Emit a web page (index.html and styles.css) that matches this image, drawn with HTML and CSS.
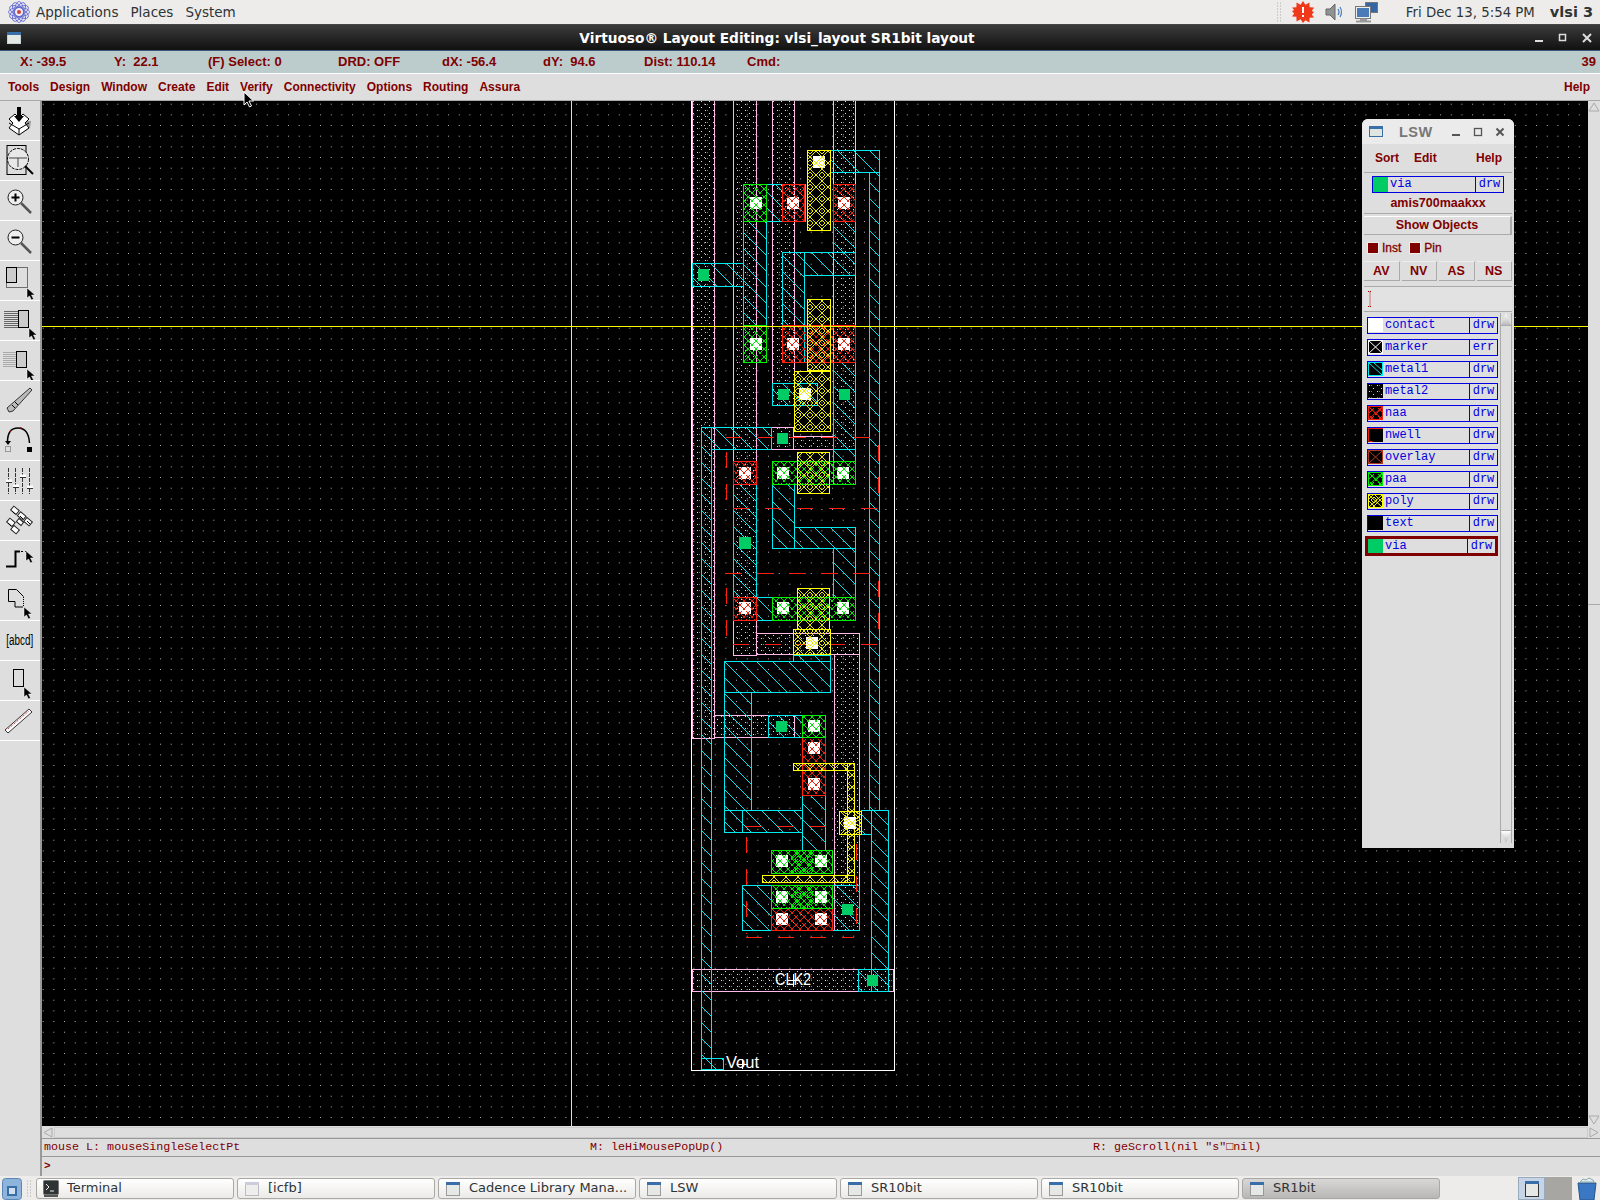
FILE: index.html
```html
<!DOCTYPE html>
<html lang="en">
<head>
    <meta charset="UTF-8">
    <title>Virtuoso Layout Editing: vlsi_layout SR1bit layout</title>
    <link rel="stylesheet" href="styles.css">
</head>
<body>
    <!-- GNOME top panel -->
    <div class="panel">
        <svg class="panel-logo" width="24" height="24" viewBox="0 0 24 24">
            <g fill="none" stroke="#5a62d0" stroke-width="0.8">
                <ellipse cx="12" cy="12" rx="10.5" ry="4.5"/>
                <ellipse cx="12" cy="12" rx="10.5" ry="4.5" transform="rotate(30 12 12)"/>
                <ellipse cx="12" cy="12" rx="10.5" ry="4.5" transform="rotate(60 12 12)"/>
                <ellipse cx="12" cy="12" rx="10.5" ry="4.5" transform="rotate(90 12 12)"/>
                <ellipse cx="12" cy="12" rx="10.5" ry="4.5" transform="rotate(120 12 12)"/>
                <ellipse cx="12" cy="12" rx="10.5" ry="4.5" transform="rotate(150 12 12)"/>
            </g>
            <circle cx="12" cy="12" r="2" fill="#d04040"/>
        </svg>
        <span class="panel-menu">Applications</span>
        <span class="panel-menu">Places</span>
        <span class="panel-menu">System</span>
        <span class="panel-spacer"></span>
        <svg class="tray-handle" width="6" height="20" viewBox="0 0 6 20">
            <path d="M0 1h1M3 1h1M0 4h1M3 4h1M0 7h1M3 7h1M0 10h1M3 10h1M0 13h1M3 13h1M0 16h1M3 16h1M0 19h1M3 19h1" stroke="#aaa" fill="none"/>
        </svg>
        <svg class="tray-icon" width="22" height="22" viewBox="0 0 22 22">
            <path d="M11 0l2.400 3.800 4-2.200.2 4.600 4.400.2-2.200 3.600 2.200 1-2.200 2.600 2.200 3-4.400.2-.2 4.600-4-2.200L11 22l-2.400-3.800-4 2.200-.2-4.600-4.400-.2 2.200-3-2.200-2.600 2.200-1L0 6.400l4.400-.2.2-4.600 4 2.200z" fill="#f0381a"/>
            <path d="M10 6h2v6h-2zM10 14h2v2h-2z" fill="#fff"/>
        </svg>
        <svg class="tray-icon tray-sound" width="20" height="20" viewBox="0 0 20 20">
            <path d="M1 7h4l5-5v16l-5-5H1z" fill="#8f9492" stroke="#666"/>
            <path d="M13 7q2 3 0 6M15 5q3 5 0 10" fill="none" stroke="#4a7fc0" stroke-width="1.2"/>
        </svg>
        <svg class="tray-icon tray-net" width="24" height="22" viewBox="0 0 24 22">
            <rect x="10.5" y="1.500" width="12" height="10" fill="#3465a4" stroke="#777"/>
            <rect x="1.500" y="6.500" width="13" height="10" fill="#4a7ab8" stroke="#eee"/>
            <rect x="0.500" y="5.500" width="15" height="12" fill="none" stroke="#777"/>
            <path d="M1 20.500h15M5 18.500h7" stroke="#999" stroke-width="2"/>
        </svg>
        <span class="panel-clock">Fri Dec 13, 5:54 PM</span>
        <span class="panel-user">vlsi 3</span>
    </div>

    <!-- window title -->
    <div class="titlebar">
        <svg class="win-icon" width="14" height="12" viewBox="0 0 14 12">
            <rect x="0.500" y="0.500" width="13" height="11" fill="#e4e8e4" stroke="#c8d0d8"/>
            <rect x="0" y="0" width="14" height="3" fill="#3a6ea8"/>
        </svg>
        <span class="title-text">Virtuoso® Layout Editing: vlsi_layout SR1bit layout</span>
        <div class="win-buttons">
            <svg width="12" height="12" viewBox="0 0 12 12"><rect x="2" y="8" width="8" height="2" fill="#ddd"/></svg>
            <svg width="12" height="12" viewBox="0 0 12 12"><rect x="2.500" y="2.500" width="6" height="6" fill="none" stroke="#ddd" stroke-width="1.500"/></svg>
            <svg width="12" height="12" viewBox="0 0 12 12"><path d="M2 2l8 8M10 2l-8 8" stroke="#ddd" stroke-width="2"/></svg>
        </div>
    </div>

    <!-- coordinate readout -->
    <div class="coords">
        <span class="coord coord-x">X: -39.5</span>
        <span class="coord coord-y">Y:&nbsp; 22.1</span>
        <span class="coord coord-sel">(F) Select: 0</span>
        <span class="coord coord-drd">DRD: OFF</span>
        <span class="coord coord-dx">dX: -56.4</span>
        <span class="coord coord-dy">dY:&nbsp; 94.6</span>
        <span class="coord coord-dist">Dist: 110.14</span>
        <span class="coord">Cmd:</span>
        <span class="coord coord-num">39</span>
    </div>

    <div class="menubar">
        <span>Tools</span>
        <span>Design</span>
        <span>Window</span>
        <span>Create</span>
        <span>Edit</span>
        <span>Verify</span>
        <span>Connectivity</span>
        <span>Options</span>
        <span>Routing</span>
        <span>Assura</span>
        <span class="menu-help">Help</span>
    </div>

    <div class="workarea">
        <!-- tool strip -->
        <div class="tools">
            <svg class="defs-holder" width="0" height="0">
                <defs>
                    <path id="ptr" d="M0 0v10l2.500-2 2 4 2-1-2-4h3.500z" fill="#000" stroke="#fff" stroke-width="0.500"/>
                </defs>
            </svg>
            <div class="tool"><svg width="40" height="39" viewBox="0 0 40 39">
                <path d="M10 19l9 15 11-7 1-7z" fill="#999"/>
                <path d="M9 18l6-5 4 4 4-4 6 5-4 4 4 5-10 7-10-7 4-5z" fill="#fff" stroke="#000"/>
                <path d="M9 22l10 6 10-6M19 28v6" fill="none" stroke="#000"/>
                <path d="M17 6h4v9h3l-5 6-5-6h3z" fill="#000"/>
            </svg></div>
            <div class="tool"><svg width="40" height="39" viewBox="0 0 40 39">
                <rect x="7" y="4.500" width="19" height="29" fill="#ddd" stroke="#000"/>
                <circle cx="18" cy="18" r="10.500" fill="#e8e8e8" stroke="#000" stroke-dasharray="3 1"/>
                <path d="M9 17h18M18 17v9" stroke="#444"/>
                <path d="M25 25l8 8" stroke="#000" stroke-width="2"/>
            </svg></div>
            <div class="tool"><svg width="40" height="39" viewBox="0 0 40 39">
                <circle cx="15.500" cy="16.500" r="7.500" fill="#eee" stroke="#222"/>
                <path d="M11.500 16.500h8M15.500 12.500v8" stroke="#000" stroke-width="2"/>
                <path d="M21 22l10 10" stroke="#555" stroke-width="2.500"/>
            </svg></div>
            <div class="tool"><svg width="40" height="39" viewBox="0 0 40 39">
                <circle cx="15.500" cy="16.500" r="7.500" fill="#eee" stroke="#222"/>
                <path d="M11.500 16.500h8" stroke="#000" stroke-width="2"/>
                <path d="M21 22l10 10" stroke="#555" stroke-width="2.500"/>
            </svg></div>
            <div class="tool"><svg width="40" height="39" viewBox="0 0 40 39">
                <rect x="6.500" y="6.500" width="21" height="20" fill="none" stroke="#000" stroke-dasharray="1 1"/>
                <rect x="6.500" y="6.500" width="10" height="15" fill="#ccc" stroke="#000"/>
                <use href="#ptr" x="27" y="27"/>
            </svg></div>
            <div class="tool"><svg width="40" height="39" viewBox="0 0 40 39">
                <path d="M4 10.500h15M4 12.500h15M4 14.500h15M4 16.500h15M4 18.500h15M4 20.500h15M4 22.500h15M4 24.500h15M4 26.500h15" stroke="#666"/>
                <rect x="18.500" y="9.500" width="10" height="17" fill="#ccc" stroke="#000"/>
                <use href="#ptr" x="29" y="27"/>
            </svg></div>
            <div class="tool"><svg width="40" height="39" viewBox="0 0 40 39">
                <path d="M3 11.500h13M3 13.500h13M3 15.500h13M3 17.500h13M3 19.500h13M3 21.500h13M3 23.500h13M3 25.500h13" stroke="#aaa"/>
                <rect x="16.500" y="10.500" width="10" height="16" fill="#ccc" stroke="#000"/>
                <use href="#ptr" x="27" y="28"/>
            </svg></div>
            <div class="tool"><svg width="40" height="39" viewBox="0 0 40 39">
                <path d="M7 27l2 4 4-1 19-21-2-2z" fill="#bbb" stroke="#333"/>
                <path d="M12 24l3 3M15 21l3 3" stroke="#000"/>
            </svg></div>
            <div class="tool"><svg width="40" height="39" viewBox="0 0 40 39">
                <path d="M7.500 21q0-14 10.500-14t11.500 15" fill="none" stroke="#000" stroke-width="1.500"/>
                <path d="M10 11l2-2M20 7h2" stroke="#a00"/>
                <path d="M5 20h6l-3 4z" fill="#000"/>
                <rect x="5.500" y="25.500" width="5" height="5" fill="none" stroke="#555" stroke-dasharray="1 1"/>
                <rect x="27" y="26" width="5" height="5" fill="#000"/>
            </svg></div>
            <div class="tool"><svg width="40" height="39" viewBox="0 0 40 39">
                <path d="M8.500 7v26M15.500 7v26M22.500 7v26M29.500 7v26" stroke="#333" stroke-dasharray="4 1"/>
                <path d="M6 20h6M13 25h6M20 15h6M27 26h6" stroke="#fff" stroke-width="3"/>
                <path d="M6 21.500h6M13 26.500h6M20 16.500h6M27 27.500h6" stroke="#333"/>
            </svg></div>
            <div class="tool"><svg width="40" height="39" viewBox="0 0 40 39">
                <g fill="#fff" stroke="#222">
                    <rect x="11" y="7" width="7" height="5" transform="rotate(40 15 10)"/>
                    <rect x="18" y="12" width="7" height="5" transform="rotate(40 21 15)"/>
                    <rect x="25" y="18" width="7" height="5" transform="rotate(40 28 20)"/>
                    <rect x="7" y="19" width="7" height="5" transform="rotate(40 11 22)"/>
                    <rect x="12" y="26" width="7" height="5" transform="rotate(40 15 28)"/>
                    <rect x="17" y="19" width="6" height="4" transform="rotate(40 20 21)"/>
                </g>
                <path d="M12 10l3 3M20 15l3 3M27 20l3 3M8 22l3 3" stroke="#000"/>
            </svg></div>
            <div class="tool"><svg width="40" height="39" viewBox="0 0 40 39">
                <path d="M6 25.500h9.500V10.500H20" fill="none" stroke="#000" stroke-width="2"/>
                <path d="M21 10.500h6" stroke="#000" stroke-dasharray="2 2"/>
                <use href="#ptr" x="26" y="10"/>
            </svg></div>
            <div class="tool"><svg width="40" height="39" viewBox="0 0 40 39">
                <path d="M8.500 8.500h8l7 7" fill="none" stroke="#000"/>
                <path d="M23.500 16v10" stroke="#000" stroke-dasharray="1 1"/>
                <path d="M8.500 8.500v12h6.500v5.500h8" fill="none" stroke="#000"/>
                <use href="#ptr" x="24" y="26"/>
            </svg></div>
            <div class="tool"><span class="tool-label">[abcd]</span></div>
            <div class="tool"><svg width="40" height="39" viewBox="0 0 40 39">
                <rect x="13.500" y="8.500" width="10" height="17" fill="#ddd" stroke="#000"/>
                <use href="#ptr" x="24" y="26"/>
            </svg></div>
            <div class="tool"><svg width="40" height="39" viewBox="0 0 40 39">
                <path d="M5 29l3 3 24-21-3-3z" fill="#fff" stroke="#333"/>
                <path d="M8 28l21-18" stroke="#b02020" stroke-dasharray="1 1"/>
            </svg></div>
        </div>

        <div class="editor">
            <div class="canvas-row">
                <div class="canvas">
                    <svg class="layout" width="1546" height="1025" viewBox="42 100 1546 1025" shape-rendering="crispEdges">
                        <defs>
                            <pattern id="grid" x="42.700" y="102.700" width="10.667" height="10.667" patternUnits="userSpaceOnUse">
                                <rect width="1" height="1" fill="#b8b8b8"/>
                            </pattern>
                            <pattern id="hatch" width="16" height="16" patternUnits="userSpaceOnUse">
                                <path d="M0 0l16 16" stroke="#00e8f0" stroke-width="1" fill="none"/>
                            </pattern>
                            <pattern id="dots" width="8" height="6" patternUnits="userSpaceOnUse">
                                <rect x="1" y="1" width="1" height="1" fill="#ffd0f0"/>
                                <rect x="5" y="4" width="1" height="1" fill="#ffd0f0"/>
                                <rect x="3" y="1" width="1" height="1" fill="#906088"/>
                            </pattern>
                            <pattern id="weave-green" width="8" height="8" patternUnits="userSpaceOnUse">
                                <path d="M0 0l8 8M8 0l-8 8" stroke="#00e800" stroke-width="1" fill="none" stroke-dasharray="2 1"/>
                            </pattern>
                            <pattern id="weave-red" width="8" height="8" patternUnits="userSpaceOnUse">
                                <path d="M0 0l8 8M8 0l-8 8" stroke="#f02010" stroke-width="1" fill="none" stroke-dasharray="2 1"/>
                            </pattern>
                            <pattern id="diamond" width="12" height="12" patternUnits="userSpaceOnUse">
                                <path d="M6 0l6 6-6 6-6-6zM6 3l3 3-3 3-3-3z" stroke="#e8e800" stroke-width="1" fill="none"/>
                            </pattern>
                            <pattern id="diamond-green" width="12" height="12" patternUnits="userSpaceOnUse">
                                <path d="M6 0l6 6-6 6-6-6zM6 3l3 3-3 3-3-3z" stroke="#00e800" stroke-width="1" fill="none"/>
                            </pattern>
                        </defs>

                        <rect x="42" y="100" width="1546" height="1025" fill="#000"/>
                        <rect x="42" y="100" width="1546" height="1025" fill="url(#grid)"/>

                        <!-- outline -->
                        <rect x="691.500" y="90" width="203" height="979" fill="none" stroke="#fff"/>

                        <!-- metal2 -->
                        <g fill="url(#dots)" stroke="#ffb8e8">
                            <rect x="692.500" y="90" width="22" height="647"/>
                            <rect x="733.500" y="90" width="23" height="564"/>
                            <rect x="756.500" y="632.500" width="103" height="21"/>
                            <rect x="834.500" y="653.500" width="25" height="276"/>
                            <rect x="714.500" y="714.500" width="80" height="22"/>
                            <rect x="772.500" y="90" width="22" height="314.500"/>
                            <rect x="833.500" y="90" width="22" height="358.500"/>
                            <rect x="771.500" y="426.500" width="22" height="22"/>
                            <rect x="793.500" y="435.500" width="40" height="13"/>
                            <rect x="692.500" y="968.500" width="201" height="22"/>
                        </g>

                        <!-- metal1 -->
                        <g fill="url(#hatch)" stroke="#00e8f0">
                            <rect x="830.500" y="149.500" width="49" height="22"/>
                            <rect x="869.500" y="171.500" width="10" height="638"/>
                            <rect x="743.500" y="183.500" width="62" height="37"/>
                            <rect x="743.500" y="220.500" width="23" height="141"/>
                            <rect x="692.500" y="262.500" width="51" height="23"/>
                            <rect x="782.500" y="251.500" width="22" height="110"/>
                            <rect x="804.500" y="251.500" width="51" height="23"/>
                            <rect x="833.500" y="220.500" width="22" height="31"/>
                            <rect x="772.500" y="382.500" width="45" height="22"/>
                            <rect x="833.500" y="361.500" width="22" height="87"/>
                            <rect x="711.500" y="426.500" width="60" height="22"/>
                            <rect x="701.500" y="426.500" width="10" height="642"/>
                            <rect x="833.500" y="448.500" width="22" height="35"/>
                            <rect x="733.500" y="483.500" width="23" height="113"/>
                            <rect x="756.500" y="596.500" width="16" height="23"/>
                            <rect x="772.500" y="483.500" width="22" height="64"/>
                            <rect x="794.500" y="526.500" width="61" height="21"/>
                            <rect x="833.500" y="547.500" width="22" height="49"/>
                            <rect x="724.500" y="660.500" width="106" height="31"/>
                            <rect x="793.500" y="654.500" width="37" height="6"/>
                            <rect x="724.500" y="691.500" width="27" height="118"/>
                            <rect x="724.500" y="809.500" width="18" height="22"/>
                            <rect x="742.500" y="809.500" width="60" height="22"/>
                            <rect x="802.500" y="794.500" width="23" height="55"/>
                            <rect x="768.500" y="714.500" width="34" height="22"/>
                            <rect x="742.500" y="884.500" width="117" height="45"/>
                            <rect x="861.500" y="809.500" width="10" height="24"/>
                            <rect x="871.500" y="809.500" width="17" height="181"/>
                            <rect x="858.500" y="968.500" width="30" height="22"/>
                            <rect x="701.500" y="1057.500" width="22" height="11"/>
                        </g>

                        <!-- overlay dashes -->
                        <g stroke="#ff2010" fill="none" stroke-dasharray="16 16">
                            <path d="M726 436.500H870M733 507.500H878M726 572.500H870M733 643.500H878M746 825.500H827M746 936.500H854"/>
                            <path d="M726.500 451V499M726.500 587V635M878.500 444V492M878.500 580V628M746.500 836V933M856.500 843V923"/>
                        </g>

                        <!-- naa -->
                        <g fill="url(#weave-red)" stroke="#ff2010">
                            <rect x="782.500" y="183.500" width="22" height="37"/>
                            <rect x="833.500" y="183.500" width="22" height="37"/>
                            <rect x="782.500" y="324.500" width="73" height="37"/>
                            <rect x="733.500" y="460.500" width="23" height="23"/>
                            <rect x="733.500" y="596.500" width="23" height="23"/>
                            <rect x="802.500" y="736.500" width="23" height="58"/>
                            <rect x="771.500" y="907.500" width="61" height="22"/>
                        </g>

                        <!-- paa -->
                        <g fill="url(#weave-green)" stroke="#00f000">
                            <rect x="743.500" y="183.500" width="23" height="37"/>
                            <rect x="743.500" y="324.500" width="23" height="37"/>
                            <rect x="772.500" y="460.500" width="83" height="23"/>
                            <rect x="772.500" y="596.500" width="83" height="23"/>
                            <rect x="802.500" y="714.500" width="23" height="22"/>
                            <rect x="771.500" y="849.500" width="61" height="23"/>
                            <rect x="771.500" y="884.500" width="61" height="23"/>
                        </g>
                        <g fill="url(#diamond-green)" stroke="none">
                            <rect x="791" y="850" width="22" height="22"/>
                            <rect x="791" y="885" width="22" height="22"/>
                        </g>

                        <!-- poly -->
                        <g fill="url(#diamond)" stroke="#ffff00" stroke-width="1">
                            <rect x="807.500" y="149.500" width="23" height="80"/>
                            <rect x="807.500" y="298.500" width="23" height="71"/>
                            <rect x="794.500" y="370.500" width="36" height="60"/>
                            <rect x="797.500" y="451.500" width="32" height="41"/>
                            <rect x="797.500" y="587.500" width="32" height="41"/>
                            <rect x="793.500" y="628.500" width="37" height="25"/>
                            <rect x="793.500" y="762.500" width="61" height="7"/>
                            <rect x="847.500" y="762.500" width="7" height="119"/>
                            <rect x="762.500" y="874.500" width="92" height="7"/>
                            <rect x="839.500" y="810.500" width="22" height="23"/>
                        </g>

                        <!-- contacts -->
                        <g fill="#fff">
                            <rect x="813" y="155" width="12" height="12"/>
                            <rect x="750" y="196" width="12" height="12"/>
                            <rect x="787" y="196" width="12" height="12"/>
                            <rect x="838" y="196" width="12" height="12"/>
                            <rect x="750" y="337" width="12" height="12"/>
                            <rect x="787" y="337" width="12" height="12"/>
                            <rect x="838" y="337" width="12" height="12"/>
                            <rect x="799" y="387" width="12" height="12"/>
                            <rect x="739" y="466" width="12" height="12"/>
                            <rect x="777" y="466" width="12" height="12"/>
                            <rect x="837" y="466" width="12" height="12"/>
                            <rect x="739" y="601" width="12" height="12"/>
                            <rect x="777" y="601" width="12" height="12"/>
                            <rect x="837" y="601" width="12" height="12"/>
                            <rect x="806" y="636" width="12" height="12"/>
                            <rect x="808" y="719" width="12" height="12"/>
                            <rect x="808" y="741" width="12" height="12"/>
                            <rect x="808" y="777" width="12" height="12"/>
                            <rect x="844" y="816" width="12" height="12"/>
                            <rect x="776" y="854" width="12" height="12"/>
                            <rect x="815" y="854" width="12" height="12"/>
                            <rect x="776" y="890" width="12" height="12"/>
                            <rect x="815" y="890" width="12" height="12"/>
                            <rect x="776" y="912" width="12" height="12"/>
                            <rect x="815" y="912" width="12" height="12"/>
                        </g>
                        <!-- layer showing through the contacts -->
                        <g fill="url(#weave-green)">
                            <rect x="750" y="196" width="12" height="12"/>
                            <rect x="750" y="337" width="12" height="12"/>
                            <rect x="777" y="466" width="12" height="12"/>
                            <rect x="837" y="466" width="12" height="12"/>
                            <rect x="777" y="601" width="12" height="12"/>
                            <rect x="837" y="601" width="12" height="12"/>
                            <rect x="808" y="719" width="12" height="12"/>
                            <rect x="776" y="854" width="12" height="12"/>
                            <rect x="815" y="854" width="12" height="12"/>
                            <rect x="776" y="890" width="12" height="12"/>
                            <rect x="815" y="890" width="12" height="12"/>
                        </g>
                        <g fill="url(#weave-red)">
                            <rect x="787" y="196" width="12" height="12"/>
                            <rect x="838" y="196" width="12" height="12"/>
                            <rect x="787" y="337" width="12" height="12"/>
                            <rect x="838" y="337" width="12" height="12"/>
                            <rect x="739" y="466" width="12" height="12"/>
                            <rect x="739" y="601" width="12" height="12"/>
                            <rect x="808" y="741" width="12" height="12"/>
                            <rect x="808" y="777" width="12" height="12"/>
                            <rect x="776" y="912" width="12" height="12"/>
                            <rect x="815" y="912" width="12" height="12"/>
                        </g>
                        <g fill="url(#diamond)">
                            <rect x="813" y="155" width="12" height="12"/>
                            <rect x="799" y="387" width="12" height="12"/>
                            <rect x="806" y="636" width="12" height="12"/>
                            <rect x="844" y="816" width="12" height="12"/>
                        </g>

                        <!-- vias -->
                        <g fill="#00cc66">
                            <rect x="698" y="268" width="11" height="12"/>
                            <rect x="778" y="388" width="11" height="11"/>
                            <rect x="839" y="388" width="11" height="11"/>
                            <rect x="777" y="432" width="11" height="11"/>
                            <rect x="739" y="536" width="12" height="12"/>
                            <rect x="776" y="720" width="11" height="11"/>
                            <rect x="842" y="903" width="11" height="11"/>
                            <rect x="867" y="974" width="11" height="11"/>
                        </g>

                        <!-- crosshair -->
                        <path d="M42 325.500H1588M571.500 100V1125" stroke="#f8f800" fill="none"/>

                        <!-- pin labels -->
                        <text class="pin-label" x="775" y="984" textLength="36" lengthAdjust="spacingAndGlyphs" shape-rendering="auto">CLK2</text>
                        <path d="M793.500 973v12M788 979.500h12" stroke="#fff" fill="none"/>
                        <text class="pin-label" x="726" y="1067" textLength="33" lengthAdjust="spacingAndGlyphs" shape-rendering="auto">Vout</text>
                        <path d="M742.500 1058v10M737 1063.500h11" stroke="#fff" fill="none"/>
                    </svg>

                    <!-- layer selection window -->
                    <div class="lsw">
                        <div class="lsw-title">
                            <svg class="lsw-icon" width="14" height="11" viewBox="0 0 14 11">
                                <rect x="0.500" y="0.500" width="13" height="10" fill="#dfe6e0" stroke="#3a6ea8"/>
                                <rect x="0" y="0" width="14" height="3" fill="#3a6ea8"/>
                            </svg>
                            <span class="lsw-name">LSW</span>
                            <div class="lsw-buttons">
                                <svg width="10" height="10" viewBox="0 0 10 10"><rect x="1" y="7" width="8" height="2" fill="#555"/></svg>
                                <svg width="10" height="10" viewBox="0 0 10 10"><rect x="1.500" y="1.500" width="7" height="7" fill="none" stroke="#555" stroke-width="1.300"/></svg>
                                <svg width="10" height="10" viewBox="0 0 10 10"><path d="M1.500 1.500l7 7M8.500 1.500l-7 7" stroke="#555" stroke-width="2"/></svg>
                            </div>
                        </div>
                        <div class="lsw-menu">
                            <span>Sort</span>
                            <span>Edit</span>
                            <span class="lsw-help">Help</span>
                        </div>
                        <div class="lsw-current">
                            <i class="swatch-via"></i>
                            <span class="lsw-current-name">via</span>
                            <span class="lsw-current-purpose">drw</span>
                        </div>
                        <div class="lsw-tech">amis700maakxx</div>
                        <div class="lsw-show">Show Objects</div>
                        <div class="lsw-checks">
                            <i class="check"></i><span>Inst</span>
                            <i class="check check-second"></i><span>Pin</span>
                        </div>
                        <div class="lsw-vis">
                            <span>AV</span><span>NV</span><span>AS</span><span>NS</span>
                        </div>
                        <div class="lsw-input"><svg width="4" height="16" viewBox="0 0 4 16"><path d="M0 .5h4M0 15.500h4M2 .5v15" stroke="#a00" stroke-dasharray="1 1" fill="none"/></svg></div>
                        <div class="lsw-body">
                            <div class="lsw-layers">
                                <div class="layer">
                                    <svg class="swatch" width="15" height="14"><rect width="15" height="14" fill="#fff"/></svg>
                                    <span class="layer-name">contact</span><span class="layer-purpose">drw</span>
                                </div>
                                <div class="layer">
                                    <svg class="swatch" width="15" height="14"><rect x="0.500" y="0.500" width="14" height="13" fill="#000" stroke="#fff"/><path d="M0 0l15 14M15 0L0 14" stroke="#fff"/></svg>
                                    <span class="layer-name">marker</span><span class="layer-purpose">err</span>
                                </div>
                                <div class="layer">
                                    <svg class="swatch" width="15" height="14"><rect x="0.500" y="0.500" width="14" height="13" fill="#000" stroke="#00e8f0"/><path d="M1 1l13 12M6 1l8 7" stroke="#00e8f0"/></svg>
                                    <span class="layer-name">metal1</span><span class="layer-purpose">drw</span>
                                </div>
                                <div class="layer">
                                    <svg class="swatch" width="15" height="14"><rect width="15" height="14" fill="#000"/><rect x="0.500" y="0.500" width="14" height="13" fill="url(#dots)"/></svg>
                                    <span class="layer-name">metal2</span><span class="layer-purpose">drw</span>
                                </div>
                                <div class="layer">
                                    <svg class="swatch" width="15" height="14"><rect x="0.500" y="0.500" width="14" height="13" fill="#000" stroke="#f02010"/><rect x="1" y="1" width="13" height="12" fill="url(#weave-red)"/><path d="M1 1l13 12M14 1L1 13" stroke="#f02010"/></svg>
                                    <span class="layer-name">naa</span><span class="layer-purpose">drw</span>
                                </div>
                                <div class="layer">
                                    <svg class="swatch" width="15" height="14"><rect width="15" height="14" fill="#000"/><path d="M.5 13.500h4M.5 13V.5H15" stroke="#f02010" fill="none"/></svg>
                                    <span class="layer-name">nwell</span><span class="layer-purpose">drw</span>
                                </div>
                                <div class="layer">
                                    <svg class="swatch" width="15" height="14"><rect x="0.500" y="0.500" width="14" height="13" fill="#000" stroke="#b03820"/><path d="M1 1l13 12M14 1L1 13" stroke="#b03820"/></svg>
                                    <span class="layer-name">overlay</span><span class="layer-purpose">drw</span>
                                </div>
                                <div class="layer">
                                    <svg class="swatch" width="15" height="14"><rect x="0.500" y="0.500" width="14" height="13" fill="#000" stroke="#00f000"/><rect x="1" y="1" width="13" height="12" fill="url(#weave-green)"/><path d="M1 1l13 12M14 1L1 13" stroke="#00f000"/></svg>
                                    <span class="layer-name">paa</span><span class="layer-purpose">drw</span>
                                </div>
                                <div class="layer">
                                    <svg class="swatch" width="15" height="14"><rect x="0.500" y="0.500" width="14" height="13" fill="#000" stroke="#ffff00"/><rect x="1" y="1" width="13" height="12" fill="url(#diamond)"/><path d="M1 1l13 12M14 1L1 13" stroke="#ffff00"/></svg>
                                    <span class="layer-name">poly</span><span class="layer-purpose">drw</span>
                                </div>
                                <div class="layer">
                                    <svg class="swatch" width="15" height="14"><rect width="15" height="14" fill="#000"/></svg>
                                    <span class="layer-name">text</span><span class="layer-purpose">drw</span>
                                </div>
                                <div class="layer layer-active">
                                    <svg class="swatch" width="15" height="14"><rect width="15" height="14" fill="#00cc66"/></svg>
                                    <span class="layer-name">via</span><span class="layer-purpose">drw</span>
                                </div>
                            </div>
                            <div class="lsw-scroll">
                                <div class="lsw-arrow"></div>
                                <div class="lsw-track"></div>
                                <div class="lsw-arrow lsw-arrow-down"></div>
                            </div>
                        </div>
                    </div>
                </div>
                <div class="vscroll">
                    <svg class="vscroll-up" width="12" height="11" viewBox="0 0 12 11"><path d="M1 10l5-8 5 8z" fill="none" stroke="#aaa"/></svg>
                    <div class="vscroll-thumb"></div>
                    <svg class="vscroll-down" width="12" height="11" viewBox="0 0 12 11"><path d="M1 1l5 8 5-8z" fill="none" stroke="#aaa"/></svg>
                </div>
            </div>
            <div class="hscroll">
                <svg width="12" height="11" viewBox="0 0 12 11"><path d="M10 1L2 5.500l8 4.500z" fill="none" stroke="#aaa"/></svg>
                <span class="hscroll-track"></span>
                <svg width="12" height="11" viewBox="0 0 12 11"><path d="M2 1l8 4.500-8 4.500z" fill="none" stroke="#aaa"/></svg>
            </div>
            <div class="mouse-row">
                <span class="mouse-l">mouse L: mouseSingleSelectPt</span>
                <span class="mouse-m">M: leHiMousePopUp()</span>
                <span>R: geScroll(nil "s"□nil)</span>
            </div>
            <div class="cmd-row">&gt;</div>
        </div>
    </div>

    <!-- GNOME taskbar -->
    <div class="taskbar">
        <svg class="show-desktop" width="20" height="22" viewBox="0 0 20 22">
            <rect x="0.500" y="0.500" width="19" height="21" rx="3" fill="#8fb4dc" stroke="#5a86b8"/>
            <rect x="5" y="8" width="10" height="10" fill="#3b6ea8"/>
            <rect x="7" y="10" width="6" height="6" fill="#cfe0f0"/>
        </svg>
        <svg class="task-handle" width="6" height="18" viewBox="0 0 6 18">
            <path d="M0 1h1M3 1h1M0 4h1M3 4h1M0 7h1M3 7h1M0 10h1M3 10h1M0 13h1M3 13h1M0 16h1M3 16h1" stroke="#aaa" fill="none"/>
        </svg>
        <div class="task">
            <svg width="16" height="17" viewBox="0 0 16 17"><rect x="0.500" y="0.500" width="15" height="14" rx="1" fill="#2e3436" stroke="#777"/><path d="M3 4l3 3-3 3M7 11h4" stroke="#eee" fill="none"/><rect x="1" y="15" width="14" height="2" fill="#555"/></svg>
            <span>Terminal</span>
        </div>
        <div class="task">
            <svg width="16" height="16" viewBox="0 0 16 16"><rect x="1.500" y="1.500" width="13" height="13" fill="#eee" stroke="#bbb"/><rect x="1" y="1" width="14" height="3" fill="#ccd"/></svg>
            <span>[icfb]</span>
        </div>
        <div class="task">
            <svg width="16" height="16" viewBox="0 0 16 16"><rect x="1.500" y="1.500" width="13" height="13" fill="#e6e8e6" stroke="#999"/><rect x="1" y="1" width="14" height="3" fill="#3a6ea8"/></svg>
            <span>Cadence Library Mana...</span>
        </div>
        <div class="task">
            <svg width="16" height="16" viewBox="0 0 16 16"><rect x="1.500" y="1.500" width="13" height="13" fill="#e6e8e6" stroke="#999"/><rect x="1" y="1" width="14" height="3" fill="#3a6ea8"/></svg>
            <span>LSW</span>
        </div>
        <div class="task">
            <svg width="16" height="16" viewBox="0 0 16 16"><rect x="1.500" y="1.500" width="13" height="13" fill="#e6e8e6" stroke="#999"/><rect x="1" y="1" width="14" height="3" fill="#3a6ea8"/></svg>
            <span>SR10bit</span>
        </div>
        <div class="task">
            <svg width="16" height="16" viewBox="0 0 16 16"><rect x="1.500" y="1.500" width="13" height="13" fill="#e6e8e6" stroke="#999"/><rect x="1" y="1" width="14" height="3" fill="#3a6ea8"/></svg>
            <span>SR10bit</span>
        </div>
        <div class="task task-active">
            <svg width="16" height="16" viewBox="0 0 16 16"><rect x="1.500" y="1.500" width="13" height="13" fill="#e6e8e6" stroke="#999"/><rect x="1" y="1" width="14" height="3" fill="#3a6ea8"/></svg>
            <span>SR1bit</span>
        </div>
        <span class="task-spacer"></span>
        <div class="workspaces">
            <div class="ws ws-on">
                <svg width="14" height="16" viewBox="0 0 14 16"><rect x="0.500" y="0.500" width="13" height="15" fill="#e6e8e6" stroke="#333"/><rect x="0" y="0" width="14" height="3" fill="#3a6ea8"/></svg>
            </div>
            <div class="ws"></div>
        </div>
        <svg class="trash" width="20" height="24" viewBox="0 0 20 24">
            <path d="M1 6h18l-2 17H3z" fill="#3a78c4" stroke="#26548c"/>
            <path d="M3 5l3-3 3 1 3-2 4 2 1 2z" fill="#e6eef6" stroke="#8aa"/>
        </svg>
    </div>

    <!-- mouse pointer -->
    <svg class="cursor" width="14" height="18" viewBox="0 0 14 18">
        <path d="M1 1v13l3-3 2.500 5 2-1-2.500-5h4.500z" fill="#000" stroke="#fff"/>
    </svg>
</body>
</html>
```

FILE: styles.css
```css
body {
    margin: 0;
    width: 1600px;
    height: 1200px;
    overflow: hidden;
    display: flex;
    flex-direction: column;
    position: relative;
    background: #000;
    font-family: "Liberation Sans", sans-serif;
}

/* top panel */
.panel {
    height: 24px;
    flex: none;
    display: flex;
    align-items: center;
    background: #edeceb;
    color: #2e3436;
    font-family: "DejaVu Sans", sans-serif;
    font-size: 13.5px;
    border-bottom: 1px solid #444;
}

.panel-logo {
    margin-left: 7px;
    margin-right: 5px;
}

.panel-menu {
    margin-right: 12px;
}

.panel-spacer {
    flex: 1;
}

.tray-handle {
    margin-right: 9px;
}

.tray-icon {
    margin-right: 9px;
}

.tray-sound {
    margin-left: 2px;
    margin-right: 10px;
}

.tray-net {
    margin-right: 27px;
}

.panel-clock {
    margin-right: 15px;
    font-size: 13.3px;
}

.panel-user {
    font-weight: bold;
    font-size: 14.5px;
    margin-right: 7px;
}

/* title bar */
.titlebar {
    height: 25px;
    flex: none;
    display: flex;
    align-items: center;
    position: relative;
    background: linear-gradient(#3b3b3b, #111);
    border-bottom: 1px solid #3a5a7a;
}

.win-icon {
    margin-left: 7px;
}

.title-text {
    position: absolute;
    left: 0;
    width: 1554px;
    text-align: center;
    color: #fff;
    font-family: "DejaVu Sans", sans-serif;
    font-weight: bold;
    font-size: 13.7px;
}

.win-buttons {
    margin-left: auto;
    margin-right: 7px;
    display: flex;
    gap: 12px;
}

/* coords and menu */
.coords {
    height: 20px;
    flex: none;
    display: flex;
    align-items: center;
    padding: 0 4px 2px 20px;
    background: #bccccc;
    color: #7f0000;
    font-weight: bold;
    font-size: 13px;
}

.coord-x { width: 94px; }
.coord-y { width: 94px; }
.coord-sel { width: 130px; }
.coord-drd { width: 104px; }
.coord-dx { width: 101px; }
.coord-dy { width: 101px; }
.coord-dist { width: 103px; }
.coord-num { margin-left: auto; }

.menubar {
    height: 26px;
    flex: none;
    display: flex;
    align-items: center;
    gap: 11px;
    padding: 0 8px;
    background: #dedede;
    border-top: 1px solid #fff;
    border-bottom: 1px solid #aaa;
    color: #7f0000;
    font-weight: bold;
    font-size: 12px;
}

.menu-help {
    margin-left: auto;
    margin-right: 2px;
}

/* work area */
.workarea {
    height: 1075px;
    flex: none;
    display: flex;
    background: #dedede;
}

.tools {
    width: 40px;
    flex: none;
    border-right: 2px solid #999;
    background: #dedede;
}

.defs-holder {
    position: absolute;
}

.tool {
    height: 39px;
    border-bottom: 1px solid #fff;
    display: flex;
    align-items: center;
    justify-content: center;
}

.tool-label {
    font-family: "Liberation Sans", sans-serif;
    font-size: 13px;
    color: #000;
    transform: scale(0.76, 1.1);
}

.editor {
    flex: 1;
    min-width: 0;
    display: flex;
    flex-direction: column;
}

.canvas-row {
    height: 1025px;
    flex: none;
    display: flex;
}

.canvas {
    width: 1546px;
    flex: none;
    position: relative;
    overflow: hidden;
}

.layout {
    display: block;
}

.pin-label {
    fill: #fff;
    font-family: "Liberation Sans", sans-serif;
    font-size: 16px;
}

.vscroll {
    flex: 1;
    background: #dedede;
    display: flex;
    flex-direction: column;
}

.vscroll-thumb {
    flex: 1;
    background: linear-gradient(#dedede 492px, #aaa 492px, #aaa 493px, #dedede 493px);
}

.hscroll {
    height: 12px;
    flex: none;
    display: flex;
    align-items: center;
    background: #dedede;
    border-bottom: 1px solid #999;
}

.hscroll-track {
    flex: 1;
    height: 9px;
    border: 1px solid #ccc;
}

.mouse-row {
    flex: none;
    display: flex;
    align-items: center;
    padding: 0 0 2px 2px;
    box-sizing: content-box;
    height: 15px;
    background: #dedede;
    border-bottom: 1px solid #999;
    color: #7f0000;
    font-family: "Liberation Mono", monospace;
    font-size: 11.7px;
}

.mouse-l { width: 546px; }
.mouse-m { width: 503px; }

.cmd-row {
    flex: 1;
    padding-left: 2px;
    padding-top: 3px;
    color: #7f0000;
    font-family: "Liberation Mono", monospace;
    font-weight: bold;
    font-size: 11px;
}

/* LSW window */
.lsw {
    position: absolute;
    left: 1320px;
    top: 18px;
    width: 152px;
    height: 729px;
    box-sizing: border-box;
    padding: 0 2px;
    background: #dedede;
    border-radius: 6px 6px 0 0;
    color: #7f0000;
    font-size: 12.5px;
    font-weight: bold;
}

.lsw-title {
    height: 25px;
    margin: 0 -2px;
    display: flex;
    align-items: center;
    background: #ebebeb;
    border-radius: 6px 6px 0 0;
}

.lsw-icon {
    margin-left: 7px;
}

.lsw-name {
    margin-left: 16px;
    color: #777;
    font-size: 14.5px;
    letter-spacing: 0.5px;
}

.lsw-buttons {
    margin-left: auto;
    margin-right: 9px;
    display: flex;
    gap: 12px;
}

.lsw-menu {
    height: 28px;
    display: flex;
    align-items: center;
    padding-left: 11px;
    gap: 15px;
    border-bottom: 1px solid #aaa;
    font-size: 12px;
}

.lsw-help {
    margin-left: auto;
    margin-right: 10px;
}

.lsw-current {
    height: 17px;
    box-sizing: border-box;
    margin: 3px 8px 0 8px;
    display: flex;
    border: 1px solid #0000e0;
    color: #0000e0;
    font-family: "Liberation Mono", monospace;
    font-weight: normal;
    font-size: 12px;
    line-height: 15px;
}

.swatch-via {
    width: 15px;
    background: #00cc66;
}

.lsw-current-name {
    flex: 1;
    padding-left: 2px;
}

.lsw-current-purpose {
    width: 27px;
    text-align: center;
    border-left: 1px solid #0000e0;
}

.lsw-tech {
    height: 20px;
    line-height: 21px;
    text-align: center;
    border-bottom: 1px solid #aaa;
}

.lsw-show {
    height: 17px;
    margin-top: 2px;
    line-height: 17px;
    text-align: center;
    border-top: 1px solid #fff;
    border-bottom: 1px solid #aaa;
    border-right: 2px solid #aaa;
}

.lsw-checks {
    height: 26px;
    display: flex;
    align-items: center;
    padding-left: 3px;
    font-size: 12px;
    font-weight: normal;
    -webkit-text-stroke: 0.3px #7f0000;
}

.check {
    width: 10px;
    height: 10px;
    margin-right: 3px;
    background: #7f0000;
    border: 1px solid #eee;
}

.check-second {
    margin-left: 8px;
}

.lsw-vis {
    height: 20px;
    display: flex;
    gap: 2px;
}

.lsw-vis span {
    flex: 1;
    text-align: center;
    line-height: 19px;
    border-top: 1px solid #eee;
    border-bottom: 1px solid #aaa;
    border-right: 1px solid #aaa;
}

.lsw-input {
    height: 26px;
    margin-top: 5px;
    box-sizing: border-box;
    padding: 4px 0 0 4px;
    border-top: 1px solid #aaa;
    border-bottom: 1px solid #aaa;
    background: #e2e2e2;
}

.lsw-body {
    display: flex;
    margin-top: 1px;
}

.lsw-layers {
    width: 131px;
    flex: none;
    margin-left: 3px;
    margin-top: 4.300px;
    display: flex;
    flex-direction: column;
    gap: 5.600px;
}

.layer {
    height: 16.400px;
    box-sizing: border-box;
    display: flex;
    align-items: stretch;
    border: 1px solid #0000e0;
    color: #0000e0;
    font-family: "Liberation Mono", monospace;
    font-size: 12px;
    font-weight: normal;
    line-height: 14px;
}

.swatch {
    flex: none;
}

.layer-name {
    flex: 1;
    padding-left: 2px;
}

.layer-purpose {
    width: 27px;
    text-align: center;
    border-left: 1px solid #0000e0;
}

.layer-active {
    border: 3px solid #7f0000;
    margin-left: -2px;
    height: 20px;
    margin-top: -1.600px;
    line-height: 14px;
}

.lsw-scroll {
    width: 12px;
    flex: none;
    box-sizing: border-box;
    margin-left: 2px;
    height: 530px;
    display: flex;
    flex-direction: column;
    border-left: 1px solid #aaa;
    border-right: 1px solid #aaa;
}

.lsw-arrow {
    height: 12px;
    background: linear-gradient(#fff, #bbb);
    clip-path: polygon(50% 0, 100% 100%, 0 100%);
}

.lsw-arrow-down {
    clip-path: polygon(0 0, 100% 0, 50% 100%);
}

.lsw-track {
    flex: 1;
    border-top: 1px solid #aaa;
    border-bottom: 1px solid #aaa;
}

/* taskbar */
.taskbar {
    height: 25px;
    flex: none;
    display: flex;
    align-items: center;
    background: #edeceb;
    color: #2e3436;
    font-family: "DejaVu Sans", sans-serif;
    font-size: 13px;
}

.show-desktop {
    margin-left: 2px;
}

.task-handle {
    margin-left: 5px;
    margin-right: 3px;
}

.task {
    width: 198px;
    height: 21px;
    box-sizing: border-box;
    margin-right: 3px;
    padding-left: 6px;
    display: flex;
    align-items: center;
    gap: 8px;
    background: linear-gradient(#fff, #ebeae8);
    border: 1px solid #a8a8a4;
    border-radius: 3px;
}

.task span {
    padding-bottom: 3px;
}

.task-active {
    background: linear-gradient(#d8d7d5, #b8b7b5);
}

.task-spacer {
    flex: 1;
}

.workspaces {
    display: flex;
    height: 23px;
}

.ws {
    width: 27px;
    background: #a8a6a3;
}

.ws-on {
    background: #c6d4e8;
    display: flex;
    align-items: center;
    justify-content: center;
    border: 1px solid #9ab;
    box-sizing: border-box;
}

.trash {
    margin-left: 5px;
    margin-right: 3px;
}

/* pointer over everything */
.cursor {
    position: absolute;
    left: 243px;
    top: 91px;
}
```
